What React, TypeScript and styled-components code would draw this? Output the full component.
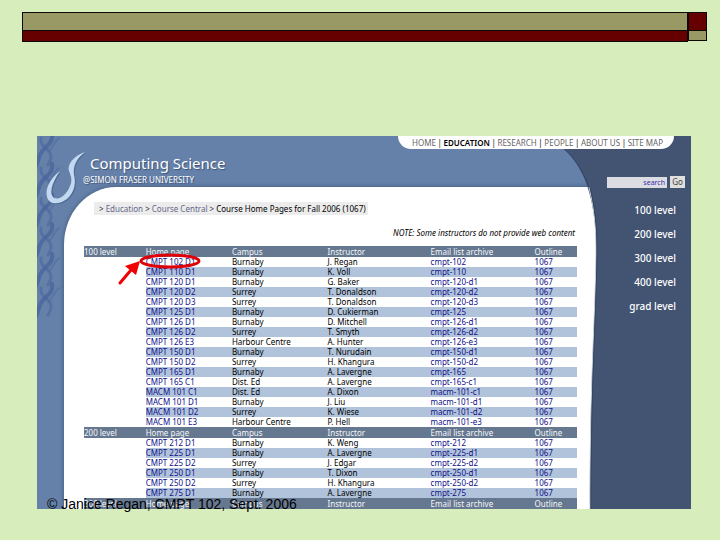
import React from "react";
import styled, { createGlobalStyle } from "styled-components";

const GlobalStyle = createGlobalStyle`
  * { box-sizing: border-box; }
  body {
    margin: 0;
    background: #d7edbc;
    font-family: "Noto Sans", "Open Sans", sans-serif;
  }
`;

const Slide = styled.div`
  min-height: 100vh;
  padding: 12px 0 31px;
  background: #d7edbc;
`;

const Banner = styled.div`
  display: grid;
  grid-template-columns: 1fr 19px;
  grid-template-rows: 18px 12px;
  margin: 0 13px 0 22px;
`;

const Block = styled.div<{ $tone: "khaki" | "maroon"; $short?: boolean }>`
  background: ${(p) => (p.$tone === "khaki" ? "#999966" : "#660000")};
  border: solid #0c0804;
  border-width: 1px 1px 0;
  ${(p) => p.$short !== undefined && "border-bottom-width: 1px;"}
  ${(p) => p.$short && "height: 11px;"}
`;

const Site = styled.section`
  position: relative;
  display: grid;
  grid-template-columns: 1fr 92px;
  grid-template-rows: 13px auto;
  margin: 94px 29px 0 37px;
  background: linear-gradient(to left, #425472 92px, #6581a9 92px);
`;

const Nav = styled.nav`
  position: relative;
  z-index: 2;
  grid-column: 1 / -1;
  justify-self: end;
  display: flex;
  align-items: center;
  justify-content: space-between;
  width: 276px;
  margin-right: 17px;
  padding: 0 11px 0 14px;
  border-radius: 0 0 14px 14px;
  background: #ffffff;
  color: #111111;
  font-size: 8px;
  line-height: 12px;
`;

const NavLink = styled.a<{ $current?: boolean }>`
  color: ${(p) => (p.$current ? "#000000" : "#666666")};
  font-weight: ${(p) => (p.$current ? 600 : 400)};
  text-decoration: none;
`;

const Main = styled.main`
  display: flex;
  flex-direction: column;
`;

const Brand = styled.header`
  height: 38px;
  padding: 3px 0 0 46px;
  color: #ffffff;
  text-shadow: 1px 1px 1px #3d5478;
`;

const Title = styled.h1`
  margin: 0 0 0 7px;
  font-size: 15px;
  font-weight: 400;
  line-height: 22px;
`;

const Subtitle = styled.p`
  margin: 0;
  font-size: 8px;
  line-height: 12px;
`;

const Panel = styled.div`
  flex: 1;
  margin-left: 27px;
  padding: 15px 22px 0 20px;
  border-radius: 52px 0 0 0 / 58px 0 0 0;
  background: #ffffff;
  box-shadow: 0 0 4px 0 #3e5577;
  clip-path: inset(-6px 0 0 -6px);
`;

const Breadcrumb = styled.nav`
  width: fit-content;
  margin-left: 10px;
  padding: 0 2px 0 5px;
  background: #ececec;
  color: #333344;
  font-size: 8px;
  line-height: 13px;
  white-space: nowrap;
`;

const Crumb = styled.a`
  color: #66668a;
  text-decoration: none;
`;

const Here = styled.span`
  color: #000000;
`;

const Note = styled.p`
  margin: 11px 2px 7px 0;
  color: #000000;
  font-size: 8px;
  font-style: italic;
  line-height: 13px;
  text-align: right;
`;

const CourseTable = styled.table`
  position: relative;
  width: 100%;
  border-collapse: collapse;
  table-layout: fixed;
  font-size: 8px;
  line-height: 10px;
  white-space: nowrap;
  z-index: 1;
`;

const Col = styled.col<{ $share: number }>`
  width: ${(p) => p.$share}%;
`;

const LevelRow = styled.tr`
  height: 11px;
  background: #66788f;
  color: #f4f7fa;
`;

const Head = styled.th`
  padding: 0;
  font-weight: 400;
  text-align: left;
`;

const CourseRow = styled.tr`
  height: 10px;
`;

const Cell = styled.td<{ $shaded?: boolean }>`
  padding: 0;
  background: ${(p) => (p.$shaded ? "#b0c3da" : "transparent")};
  color: #000000;
`;

const CourseLink = styled.a`
  color: #11118a;
  text-decoration: none;
`;

const Sidebar = styled.aside`
  position: relative;
  z-index: 1;
  padding: 27px 6px 0 8px;
`;

const Search = styled.form`
  display: flex;
  align-items: center;
  gap: 3px;
`;

const SearchBox = styled.input`
  flex: 1;
  min-width: 0;
  height: 11px;
  padding: 0 2px;
  border: 0;
  background: #dcdde2;
  color: #3b30b0;
  font: 7px/11px "Noto Sans", sans-serif;
  text-align: right;
`;

const GoButton = styled.button`
  width: 15px;
  height: 12px;
  padding: 0;
  border: 0;
  background: #dfdfdd;
  color: #444444;
  font: 8px/12px "Noto Sans", sans-serif;
`;

const Levels = styled.nav`
  display: flex;
  flex-direction: column;
  align-items: flex-end;
  margin: 10px 9px 0 0;
`;

const LevelLink = styled.a`
  color: #ffffff;
  font-size: 10px;
  font-weight: 500;
  line-height: 24px;
  text-decoration: none;
`;

const Helix = styled.svg`
  position: absolute;
  left: 0;
  top: 0;
`;

const Sweep = styled.svg`
  position: absolute;
  top: 0;
  right: 91px;
  height: 100%;
`;

const Marker = styled.svg`
  position: absolute;
  z-index: 3;
  left: 78px;
  top: 114px;
`;

const Copyright = styled.footer`
  position: absolute;
  z-index: 3;
  left: 10px;
  bottom: -4px;
  color: #000000;
  font: 14px/18px "Liberation Sans", Arial, sans-serif;
  white-space: nowrap;
`;

type Course = [string, string, string, string];

const levels: { name: string; courses: Course[] }[] = [
  {
    name: "100 level",
    courses: [
      ["CMPT 102 D1", "Burnaby", "J. Regan", "cmpt-102"],
      ["CMPT 110 D1", "Burnaby", "K. Voll", "cmpt-110"],
      ["CMPT 120 D1", "Burnaby", "G. Baker", "cmpt-120-d1"],
      ["CMPT 120 D2", "Surrey", "T. Donaldson", "cmpt-120-d2"],
      ["CMPT 120 D3", "Surrey", "T. Donaldson", "cmpt-120-d3"],
      ["CMPT 125 D1", "Burnaby", "D. Cukierman", "cmpt-125"],
      ["CMPT 126 D1", "Burnaby", "D. Mitchell", "cmpt-126-d1"],
      ["CMPT 126 D2", "Surrey", "T. Smyth", "cmpt-126-d2"],
      ["CMPT 126 E3", "Harbour Centre", "A. Hunter", "cmpt-126-e3"],
      ["CMPT 150 D1", "Burnaby", "T. Nurudain", "cmpt-150-d1"],
      ["CMPT 150 D2", "Surrey", "H. Khangura", "cmpt-150-d2"],
      ["CMPT 165 D1", "Burnaby", "A. Lavergne", "cmpt-165"],
      ["CMPT 165 C1", "Dist. Ed", "A. Lavergne", "cmpt-165-c1"],
      ["MACM 101 C1", "Dist. Ed", "A. Dixon", "macm-101-c1"],
      ["MACM 101 D1", "Burnaby", "J. Liu", "macm-101-d1"],
      ["MACM 101 D2", "Surrey", "K. Wiese", "macm-101-d2"],
      ["MACM 101 E3", "Harbour Centre", "P. Hell", "macm-101-e3"],
    ],
  },
  {
    name: "200 level",
    courses: [
      ["CMPT 212 D1", "Burnaby", "K. Weng", "cmpt-212"],
      ["CMPT 225 D1", "Burnaby", "A. Lavergne", "cmpt-225-d1"],
      ["CMPT 225 D2", "Surrey", "J. Edgar", "cmpt-225-d2"],
      ["CMPT 250 D1", "Burnaby", "T. Dixon", "cmpt-250-d1"],
      ["CMPT 250 D2", "Surrey", "H. Khangura", "cmpt-250-d2"],
      ["CMPT 275 D1", "Burnaby", "A. Lavergne", "cmpt-275"],
    ],
  },
  { name: "300 level", courses: [] },
];

const headings = ["Home page", "Campus", "Instructor", "Email list archive", "Outline"];
const shares = [12.5, 17.5, 19.4, 20.9, 21.1, 8.6];
const navItems = ["HOME", "EDUCATION", "RESEARCH", "PEOPLE", "ABOUT US", "SITE MAP"];
const sideItems = ["100 level", "200 level", "300 level", "400 level", "grad level"];
const twists = [-6, 24, 54, 84, 114, 144];

const swoosh =
  "M48 16C36 20 30 29 32 35C35 42 35 46 33 50C29 60 22 64 17 62C12 58 14 48 23 35C12 43 8 54 10 61C12 69 22 69 30 63C38 56 39 46 37 39C36 30 39 23 48 16Z";

export default function App() {
  return (
    <>
      <GlobalStyle />
      <Slide>
        <Banner>
          <Block $tone="khaki" />
          <Block $tone="maroon" />
          <Block $tone="maroon" $short={false} />
          <Block $tone="khaki" $short />
        </Banner>

        <Site>
          <Helix width="60" height="190" viewBox="0 0 60 190" fill="none" aria-hidden="true">
            {twists.map((y) => (
              <g key={y} transform={`translate(0 ${y})`} strokeLinecap="round">
                <path d="M15 4C17 16 4 16 2 28C1 32 0 34 -1 36" stroke="#415d96" strokeWidth="4" opacity="0.6" />
                <path d="M4 8C2 18 15 18 14 28C13 32 12 33 11 35" stroke="#48659c" strokeWidth="3" opacity="0.55" />
                <path d="M22 8C16 12 17 17 12 21" stroke="#4f6ca2" strokeWidth="2" opacity="0.6" />
              </g>
            ))}
            <path d={swoosh} transform="translate(1 1)" fill="#3f5a85" opacity="0.6" />
            <path d={swoosh} fill="#c3d9f1" />
          </Helix>

          <Nav aria-label="Site">
            {navItems.map((item, i) => (
              <React.Fragment key={item}>
                {i > 0 && <span>|</span>}
                <NavLink href="#" $current={item === "EDUCATION"}>
                  {item}
                </NavLink>
              </React.Fragment>
            ))}
          </Nav>

          <Main>
            <Brand>
              <Title>Computing Science</Title>
              <Subtitle>@SIMON FRASER UNIVERSITY</Subtitle>
            </Brand>
            <Panel>
              <Breadcrumb aria-label="Breadcrumb">
                &gt; <Crumb href="#">Education</Crumb> &gt; <Crumb href="#">Course Central</Crumb> &gt;{" "}
                <Here>Course Home Pages for Fall 2006 (1067)</Here>
              </Breadcrumb>
              <Note>NOTE: Some instructors do not provide web content</Note>
              <CourseTable>
                <colgroup>
                  {shares.map((share, i) => (
                    <Col key={i} $share={share} />
                  ))}
                </colgroup>
                {levels.map((level) => (
                  <tbody key={level.name}>
                    <LevelRow>
                      <Head scope="rowgroup">{level.name}</Head>
                      {headings.map((h) => (
                        <Head key={h} scope="col">
                          {h}
                        </Head>
                      ))}
                    </LevelRow>
                    {level.courses.map(([code, campus, teacher, list], i) => {
                      const shaded = i % 2 === 1;
                      return (
                        <CourseRow key={code}>
                          <Cell />
                          <Cell $shaded={shaded}>
                            <CourseLink href="#">{code}</CourseLink>
                          </Cell>
                          <Cell $shaded={shaded}>{campus}</Cell>
                          <Cell $shaded={shaded}>{teacher}</Cell>
                          <Cell $shaded={shaded}>
                            <CourseLink href="#">{list}</CourseLink>
                          </Cell>
                          <Cell $shaded={shaded}>
                            <CourseLink href="#">1067</CourseLink>
                          </Cell>
                        </CourseRow>
                      );
                    })}
                  </tbody>
                ))}
              </CourseTable>
            </Panel>
          </Main>

          <Sweep width="40" viewBox="0 0 40 373" preserveAspectRatio="none" aria-hidden="true">
            <path d="M1 10C24 29 37 64 36 118C35 190 30 240 30 373H40V10Z" fill="#425472" />
            <path d="M29 51C36 80 36 100 36 118C35 190 30 240 30 373" fill="none" stroke="#c9d1dc" strokeWidth="1" />
            <path d="M30 51C37 80 37 100 37 118C36 190 31 240 31 373" fill="none" stroke="#34465f" strokeWidth="1" />
            <path d="M2 11C14 21 23 35 29 51" fill="none" stroke="#2f4566" strokeWidth="1" />
          </Sweep>

          <Sidebar>
            <Search onSubmit={(e) => e.preventDefault()}>
              <SearchBox aria-label="Search" defaultValue="search" />
              <GoButton type="submit">Go</GoButton>
            </Search>
            <Levels aria-label="Course levels">
              {sideItems.map((item) => (
                <LevelLink key={item} href="#">
                  {item}
                </LevelLink>
              ))}
            </Levels>
          </Sidebar>

          <Marker width="90" height="40" viewBox="0 0 90 40" aria-hidden="true">
            <ellipse cx="55" cy="11" rx="29" ry="6" fill="none" stroke="#e00008" strokeWidth="3" />
            <path d="M5 33L16 20" stroke="#f00000" strokeWidth="3" strokeLinecap="round" />
            <path d="M25 11L10 16L21 25Z" fill="#f00000" />
          </Marker>
          <Copyright>© Janice Regan, CMPT 102, Sept. 2006</Copyright>
        </Site>
      </Slide>
    </>
  );
}
